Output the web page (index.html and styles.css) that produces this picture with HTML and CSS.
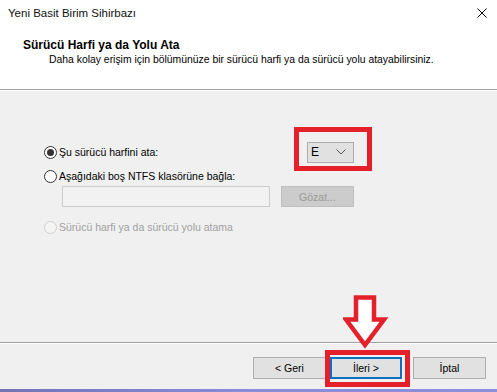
FILE: index.html
```html
<!DOCTYPE html>
<html lang="tr">
<head>
<meta charset="utf-8">
<title>Yeni Basit Birim Sihirbazı</title>
<link rel="stylesheet" href="styles.css">
</head>
<body>
<div class="window">
  <header class="header">
    <div class="titlebar">
      <span class="title">Yeni Basit Birim Sihirbazı</span>
      <svg class="close" width="10" height="10" viewBox="0 0 10 10"><path d="M0.5 0.5 L9.5 9.5 M9.5 0.5 L0.5 9.5" stroke="#000" stroke-width="1" fill="none"/></svg>
    </div>
    <div class="heading">Sürücü Harfi ya da Yolu Ata</div>
    <div class="subheading">Daha kolay erişim için bölümünüze bir sürücü harfi ya da sürücü yolu atayabilirsiniz.</div>
  </header>
  <main class="content">
    <div class="row row1">
      <label class="option"><span class="radio checked"></span><span>Şu sürücü harfini ata:</span></label>
      <div class="combo"><span>E</span><svg width="10" height="6" viewBox="0 0 10 6"><path d="M0.5 0.5 L5 5 L9.5 0.5" stroke="#555" stroke-width="1" fill="none"/></svg></div>
    </div>
    <div class="row row2">
      <label class="option"><span class="radio"></span><span>Aşağıdaki boş NTFS klasörüne bağla:</span></label>
    </div>
    <div class="row row3">
      <div class="textbox"></div>
      <div class="btn disabled">Gözat...</div>
    </div>
    <div class="row row4">
      <label class="option disabled"><span class="radio"></span><span>Sürücü harfi ya da sürücü yolu atama</span></label>
    </div>
    <div class="mark combo-mark"></div>
    <svg class="arrow" width="46" height="54" viewBox="0 0 46 54"><path d="M13 2.5 H31 V24.5 H41 L22 50 L3 24.5 H13 Z" fill="#fff" stroke="#e4202b" stroke-width="4.5" stroke-linejoin="miter"/></svg>
    <div class="mark next-mark"></div>
  </main>
  <footer class="footer">
    <div class="btn">&lt; Geri</div>
    <div class="btn default">İleri &gt;</div>
    <div class="btn cancel">İptal</div>
  </footer>
  <div class="taskstrip"></div>
</div>
</body>
</html>
```
FILE: styles.css
```css
* { box-sizing: border-box; }
html, body { margin: 0; padding: 0; }
body {
  width: 497px;
  height: 392px;
  overflow: hidden;
  font-family: "Liberation Sans", Arial, sans-serif;
  font-size: 10.5px;
  color: #000;
  background: #f0f0f0;
}
.window {
  width: 497px;
  height: 392px;
  display: flex;
  flex-direction: column;
  position: relative;
}
.header {
  height: 90px;
  background: #fff;
  border-bottom: 1px solid #a0a0a0;
  box-shadow: 0 1px 0 #fff;
  flex: none;
}
.titlebar {
  height: 26px;
  display: flex;
  align-items: center;
  justify-content: space-between;
  padding: 0 10px 0 8px;
}
.title { font-size: 11.5px; color: #111; }
.close { display: block; }
.heading {
  font-weight: bold;
  font-size: 12px;
  padding-left: 23px;
  margin-top: 12px;
  line-height: 14px;
}
.subheading {
  padding-left: 49px;
  line-height: 14px;
  margin-top: 1px;
  font-size: 10.4px;
}
.content {
  flex: 1;
  position: relative;
  padding-left: 44px;
  border-bottom: 1px solid #a0a0a0;
}
.row { display: flex; align-items: center; }
.row1 { margin-top: 51px; height: 22px; justify-content: space-between; width: 310px; }
.row2 { height: 20px; margin-top: 3px; }
.row3 { height: 21px; margin-left: 18px; }
.row4 { height: 20px; margin-top: 10px; }
.option { display: flex; align-items: center; gap: 2px; }
.radio {
  width: 13px;
  height: 13px;
  border: 1px solid #333;
  border-radius: 50%;
  background: #fff;
  display: inline-flex;
  align-items: center;
  justify-content: center;
  flex: none;
}
.radio.checked::after {
  content: "";
  width: 7px;
  height: 7px;
  border-radius: 50%;
  background: #333;
}
.option.disabled { color: #a0a0a0; }
.option.disabled .radio { border-color: #cfcfcf; background: #f4f4f4; }
.combo {
  width: 47px;
  height: 21px;
  background: #e1e1e1;
  border: 1px solid #adadad;
  display: flex;
  align-items: center;
  justify-content: space-between;
  padding: 0 7px 0 3px;
  font-size: 12px;
}
.combo svg { display: block; }
.textbox {
  width: 208px;
  height: 21px;
  border: 1px solid #cccccc;
  background: #f2f2f2;
}
.btn {
  height: 22px;
  width: 73px;
  background: #e1e1e1;
  border: 1px solid #adadad;
  display: flex;
  align-items: center;
  justify-content: center;
}
.row3 .btn { margin-left: 11px; height: 21px; }
.btn.disabled { background: #cccccc; border-color: #bfbfbf; color: #9a9a9a; }
.footer {
  height: 46px;
  flex: none;
  display: flex;
  align-items: flex-start;
  padding: 14px 0 0 253px;
  gap: 4px;
  box-shadow: inset 0 1px 0 #fff;
}
.btn.default { width: 72px; border: 2px solid #0a70c0; }
.btn.cancel { margin-left: 7px; }
.taskstrip {
  height: 3px;
  flex: none;
  background: linear-gradient(90deg, #7373b5 0%, #7b7bc4 15%, #8b8bd8 50%, #8e8edc 100%);
}
.mark {
  position: absolute;
  border: 5px solid #e4202b;
}
.combo-mark { left: 294px; top: 37px; width: 78px; height: 44px; }
.next-mark { left: 325px; top: 260px; width: 85px; height: 37px; }
.arrow { position: absolute; left: 343px; top: 205px; }
```
